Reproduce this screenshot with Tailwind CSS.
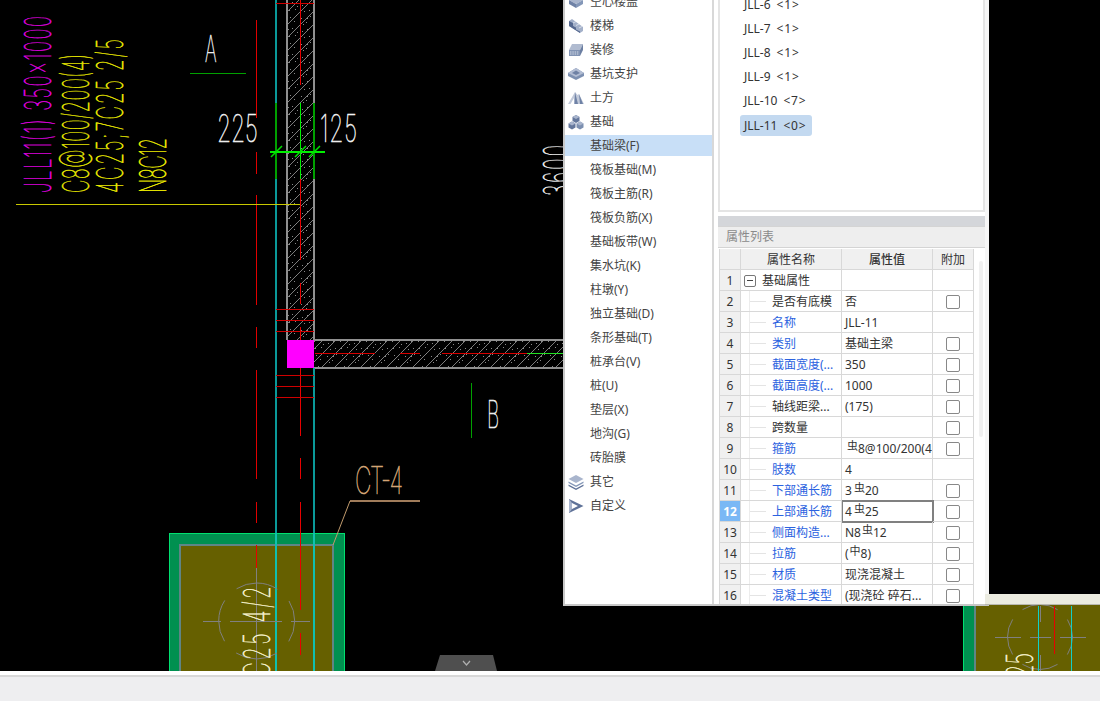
<!DOCTYPE html>
<html lang="zh">
<head>
<meta charset="utf-8">
<script src="https://cdn.jsdelivr.net/npm/@tailwindcss/browser@4"></script>
<title>属性列表</title>
</head>
<body class="m-0 bg-[#eeeef0] overflow-hidden">
<div class="w-[1100px] h-[701px] flex flex-col overflow-hidden font-['Noto_Sans','Noto_Sans_CJK_SC',sans-serif] text-xs text-[#333]">
  <main class="relative h-[671px] shrink-0 bg-black overflow-hidden">
    <svg class="absolute inset-0" width="1100" height="671" viewBox="0 0 1100 671" xmlns="http://www.w3.org/2000/svg" shape-rendering="crispEdges">
      <defs>
        <pattern id="h" width="26" height="26" patternUnits="userSpaceOnUse">
          <path d="M-1 14 14 -1M-1 27 27 -1M12 27 27 12" stroke="#7c7c7c" stroke-width="1" fill="none" shape-rendering="auto"/>
          <path d="M2 3h1v1h-1zM9 9h1v1h-1zM3 10h1v1h-1zM11 6h1v1h-1zM6 2h1v1h-1zM16 5h1v1h-1zM21 3h1v1h-1zM23 10h1v1h-1zM18 11h1v1h-1zM4 17h1v1h-1zM8 21h1v1h-1zM2 23h1v1h-1zM10 15h1v1h-1zM15 18h1v1h-1zM20 22h1v1h-1zM24 16h1v1h-1zM17 24h1v1h-1zM21 18h1v1h-1z" fill="#8a8a8a"/>
        </pattern>
      </defs>
      <!-- walls -->
      <rect x="287" y="-2" width="27" height="342" fill="url(#h)"/>
      <rect x="314" y="340" width="250" height="28" fill="url(#h)"/>
      <g stroke="#909090" stroke-width="2" fill="none">
        <path d="M287 0V340M313.500 0V340M314 340H564M314 367.500H564"/>
      </g>
      <rect x="287" y="340" width="27" height="28" fill="#ff00ff"/>
      <!-- axes teal -->
      <path d="M276 0V103M276 179V671M314 368V533" stroke="#0a9a9a" stroke-width="1.500" fill="none"/>
      <!-- red dashed left -->
      <path d="M256.500 20V118M256.500 152V174M256.500 195V305M256.500 327V348M256.500 370V479M256.500 502V523" stroke="#e00000" stroke-width="1.500" fill="none"/>
      <!-- red centre -->
      <path d="M300.500 0V85M300.500 179V260M300.500 283V304M300.500 327V340M300.500 368V436M300.500 458V479M300.500 502V533" stroke="#e80000" stroke-width="1.500" fill="none"/>
      <path d="M276 3.500H314M276 309.500H314M276 320.500H314M276 331.500H314M276 375.500H314M276 386.500H314M276 397.500H314" stroke="#d00000" stroke-width="1" fill="none"/>
      <path d="M315 353.500H375M400 353.500H420M442 353.500H527" stroke="#d80000" stroke-width="1" fill="none"/>
      <path d="M527 353.500H564" stroke="#22e022" stroke-width="1" fill="none"/>
      <!-- dimension -->
      <path d="M276 103V179M314 103V179" stroke="#00a000" stroke-width="1.500" fill="none"/>
      <path d="M300.500 103V179M270 152H325" stroke="#00f000" stroke-width="1.500" fill="none"/>
      <path d="M271 157 282 146M295 157 306 146M309 157 320 146" stroke="#00e000" stroke-width="1.500" fill="none" shape-rendering="auto"/>
      <path d="M190 73.500H246M471.500 383V438" stroke="#00a000" stroke-width="1.500" fill="none"/>
      <path d="M16 204.500H300" stroke="#c8c800" stroke-width="1.500" fill="none"/>
      <!-- pile cap -->
      <rect x="169.500" y="533.500" width="175" height="160" fill="#009050" stroke="#00e070" stroke-width="1.500"/>
      <rect x="180" y="545" width="153" height="150" fill="#666000" stroke="#5f8585" stroke-width="2"/>
      <path d="M276 533V671M314 533V671" stroke="#10c0b0" stroke-width="1.200" fill="none"/>
      <path d="M256.500 545V570M256.500 586V625M300.500 533V610M300.500 633V655" stroke="#e80000" stroke-width="1.500" fill="none"/>
      <circle cx="256.700" cy="621" r="38" fill="none" stroke="#808080" stroke-width="1" stroke-dasharray="43 16.700" stroke-dashoffset="21.500" shape-rendering="auto"/>
      <path d="M203 621.500H221M230 621.500H282M291 621.500H310M256.500 568V671" stroke="#808080" stroke-width="1" fill="none"/>
      <path d="M350 501H420" stroke="#a07c5a" stroke-width="2" fill="none"/>
      <path d="M350 501 333 545" stroke="#c09a6c" stroke-width="1" fill="none" shape-rendering="auto"/>
      <!-- right cap -->
      <rect x="963.500" y="600" width="200" height="90" fill="#009050" stroke="#00e070" stroke-width="1.500"/>
      <rect x="975" y="600" width="140" height="90" fill="#666000" stroke="#5f8585" stroke-width="1.500"/>
      <circle cx="1040" cy="637" r="32.500" fill="none" stroke="#808080" stroke-width="1" stroke-dasharray="37 14" stroke-dashoffset="18.500" shape-rendering="auto"/>
      <path d="M995 637.500H1021M1030 637.500H1051M1060 637.500H1086M1040.500 606V622M1040.500 655V671" stroke="#808080" stroke-width="1" fill="none"/>
      <path d="M1038.500 606V671M1071 606V671" stroke="#10d0c8" stroke-width="1" fill="none"/>
      <path d="M1054.500 606V654" stroke="#e80000" stroke-width="1.500" fill="none"/>
      <!-- CAD texts -->
      <g font-family="Inter, 'Liberation Sans', sans-serif" font-weight="100" shape-rendering="auto" stroke-width=".6">
        <text transform="translate(51 193) rotate(-90) scale(.5 1)" font-size="37" fill="#e000e0" stroke="#e000e0" textLength="354">JLL11(1) 350x1000</text>
        <text transform="translate(89 193) rotate(-90) scale(.5 1)" font-size="37" fill="#e8e800" stroke="#e8e800" textLength="278">C8@100/200(4)</text>
        <text transform="translate(123 193) rotate(-90) scale(.5 1)" font-size="37" fill="#f0f000" stroke="#f0f000" textLength="308">4C25;7C25 2/5</text>
        <text transform="translate(166 193) rotate(-90) scale(.5 1)" font-size="37" fill="#f0f000" stroke="#f0f000" textLength="110">N8C12</text>
        <text transform="translate(217 142) scale(.6 1)" font-size="38" fill="#f4f4f4" stroke="#f4f4f4" textLength="68">225</text>
        <text transform="translate(320 142) scale(.6 1)" font-size="38" fill="#f4f4f4" stroke="#f4f4f4" textLength="62">125</text>
        <text transform="translate(205 62) scale(.5 1)" font-size="36" fill="#f4f4f4" stroke="#f4f4f4">A</text>
        <text transform="translate(487 428) scale(.5 1)" font-size="38" fill="#f4f4f4" stroke="#f4f4f4">B</text>
        <text transform="translate(355 494) scale(.6 1)" font-size="38" fill="#d8a878" stroke="#d8a878" textLength="80">CT-4</text>
        <text transform="translate(571 196) rotate(-90) scale(.5 1)" font-size="38" fill="#f4f4f4" stroke="#f4f4f4" textLength="102">3600</text>
        <text transform="translate(270 677) rotate(-90) scale(.55 1)" font-size="37" fill="#f8f4d0" stroke="#f8f4d0" textLength="165">C25 4/2</text>
        <text transform="translate(1033 692) rotate(-90) scale(.55 1)" font-size="37" fill="#f8f4d0" stroke="#f8f4d0" textLength="71">C25</text>
      </g>
      <!-- collapse handle -->
      <path d="M440 655H493L497 671H435Z" fill="#4f4f4f" shape-rendering="auto"/>
      <path d="M463 661 466.500 665 470 661" stroke="#b0b0b0" stroke-width="1.200" fill="none" shape-rendering="auto"/>
    </svg>

    <!-- floating window -->
    <section class="absolute left-[563px] top-0 w-[426px] h-[606px] bg-white flex border-l-2 border-b-2 border-[#c8c8c8] overflow-hidden">
      <nav class="w-[149px] h-full shrink-0 border-r-2 border-[#d8d8d8] bg-white">
        <ul class="-mt-[10px] flex flex-col text-[#444]">
          <li class="h-6 flex items-center gap-[6px] pl-[3px]">
            <svg class="w-4 h-4 shrink-0" viewBox="0 0 16 16"><path d="M8 2 15 6 8 10 1 6Z" fill="#a9b5cd"/><path d="M1 6 8 10V14L1 10Z" fill="#6f82a6"/><path d="M15 6 8 10V14L15 10Z" fill="#8497b8"/></svg>
            <span>空心楼盖</span>
          </li>
          <li class="h-6 flex items-center gap-[6px] pl-[3px]">
            <svg class="w-4 h-4 shrink-0" viewBox="0 0 16 16"><path d="M1 3 4 1 15 9V13L12 15 1 8Z" fill="#a3b0c9"/><path d="M1 3 5 5V8L8 9.500V11.500L12 13.500V15L1 8Z" fill="#55688f"/><path d="M5 5 8 3.500M8 7.500 11 6M11 10 14 8.500" stroke="#e4e8f0" stroke-width=".8"/></svg>
            <span>楼梯</span>
          </li>
          <li class="h-6 flex items-center gap-[6px] pl-[3px]">
            <svg class="w-4 h-4 shrink-0" viewBox="0 0 16 16"><path d="M4 2H15L12 8H1Z" fill="#b0bbd0"/><path d="M1 8H12V14H1Z" fill="#8294b4"/><path d="M12 8 15 2V8L12 14Z" fill="#6c7fa2"/><path d="M2 10H11M2 12H11" stroke="#e8ecf4" stroke-width=".8" stroke-dasharray="1.500 .8"/></svg>
            <span>装修</span>
          </li>
          <li class="h-6 flex items-center gap-[6px] pl-[3px]">
            <svg class="w-4 h-4 shrink-0" viewBox="0 0 16 16"><path d="M8 2 16 7V10L8 14 0 10V7Z" fill="#7d90b1"/><path d="M8 2 16 7 8 11 0 7Z" fill="#b2bdd3"/><path d="M8 4.500 12 7 8 9 4 7Z" fill="#6e81a4"/></svg>
            <span>基坑支护</span>
          </li>
          <li class="h-6 flex items-center gap-[6px] pl-[3px]">
            <svg class="w-4 h-4 shrink-0" viewBox="0 0 16 16"><path d="M0 14 7 2 9.500 5 11 4 16 14Z" fill="#c2cada"/><path d="M7 2 10 14H6.500ZM11 4 15 14H12Z" fill="#6f82a6"/><path d="M2.500 14 6 8 6 14Z" fill="#fff"/></svg>
            <span>土方</span>
          </li>
          <li class="h-6 flex items-center gap-[6px] pl-[3px]">
            <svg class="w-4 h-4 shrink-0" viewBox="0 0 16 16"><path d="M8 1 11.500 3V7L8 9 4.500 7V3Z" fill="#64779c"/><path d="M4 7.500 7.500 9.500V13.500L4 15.500 .5 13.500V9.500Z" fill="#64779c"/><path d="M12 7.500 15.500 9.500V13.500L12 15.500 8.500 13.500V9.500Z" fill="#7c8fb0"/><path d="M8 1 11.500 3 8 5 4.500 3ZM4 7.500 7.500 9.500 4 11.500 .5 9.500ZM12 7.500 15.500 9.500 12 11.500 8.500 9.500Z" fill="#a9b5cd"/></svg>
            <span>基础</span>
          </li>
          <li class="h-[21px] mt-px mb-[2px] flex items-center pl-[25px] bg-[#c8dff7]">基础梁(F)</li>
          <li class="h-6 flex items-center pl-[25px]">筏板基础(M)</li>
          <li class="h-6 flex items-center pl-[25px]">筏板主筋(R)</li>
          <li class="h-6 flex items-center pl-[25px]">筏板负筋(X)</li>
          <li class="h-6 flex items-center pl-[25px]">基础板带(W)</li>
          <li class="h-6 flex items-center pl-[25px]">集水坑(K)</li>
          <li class="h-6 flex items-center pl-[25px]">柱墩(Y)</li>
          <li class="h-6 flex items-center pl-[25px]">独立基础(D)</li>
          <li class="h-6 flex items-center pl-[25px]">条形基础(T)</li>
          <li class="h-6 flex items-center pl-[25px]">桩承台(V)</li>
          <li class="h-6 flex items-center pl-[25px]">桩(U)</li>
          <li class="h-6 flex items-center pl-[25px]">垫层(X)</li>
          <li class="h-6 flex items-center pl-[25px]">地沟(G)</li>
          <li class="h-6 flex items-center pl-[25px]">砖胎膜</li>
          <li class="h-6 flex items-center gap-[6px] pl-[3px]">
            <svg class="w-4 h-4 shrink-0" viewBox="0 0 16 16"><path d="M8 1 15.500 5 8 9 .5 5Z" fill="#a9b5cd"/><path d="M.5 7.500 8 11.500 15.500 7.500V9L8 13 .5 9Z" fill="#8497b8"/><path d="M.5 10.500 8 14.500 15.500 10.500V12L8 16 .5 12Z" fill="#5f7298"/></svg>
            <span>其它</span>
          </li>
          <li class="h-6 flex items-center gap-[6px] pl-[3px]">
            <svg class="w-4 h-4 shrink-0" viewBox="0 0 16 16"><path d="M1 1 15.500 8 1 15ZM4 5V11L10 8Z" fill="#5f7298" fill-rule="evenodd"/><path d="M1 1 4 5V11L1 15Z" fill="#a9b5cd"/></svg>
            <span>自定义</span>
          </li>
        </ul>
      </nav>

      <div class="w-[4px] shrink-0 bg-white"></div>

      <div class="w-[267px] shrink-0 flex flex-col">
        <div class="h-[212px] shrink-0 border-l-2 border-r-2 border-b-2 border-[#e4e4e4] bg-white overflow-hidden pl-[21px]">
          <ul class="-mt-[7px] flex flex-col items-start">
            <li class="h-6 flex items-center gap-[6px] px-[3px]"><span>JLL-6</span><span class="tracking-[.8px]">&lt;1&gt;</span></li>
            <li class="h-6 flex items-center gap-[6px] px-[3px]"><span>JLL-7</span><span class="tracking-[.8px]">&lt;1&gt;</span></li>
            <li class="h-6 flex items-center gap-[6px] px-[3px]"><span>JLL-8</span><span class="tracking-[.8px]">&lt;1&gt;</span></li>
            <li class="h-6 flex items-center gap-[6px] px-[3px]"><span>JLL-9</span><span class="tracking-[.8px]">&lt;1&gt;</span></li>
            <li class="h-6 flex items-center gap-[6px] px-[3px]"><span>JLL-10</span><span class="tracking-[.8px]">&lt;7&gt;</span></li>
            <li class="h-[21px] mt-[2px] -ml-px flex items-center gap-[6px] pl-[4px] pr-[6px] bg-[#c3d9f0] rounded-[3px]"><span>JLL-11</span><span class="tracking-[.8px]">&lt;0&gt;</span></li>
          </ul>
        </div>
        <div class="h-[4px] shrink-0 bg-white"></div>
        <div class="h-[10px] shrink-0 bg-[#d4d6da]"></div>
        <div class="h-[22px] shrink-0 bg-[#eeeeee] border-y border-[#d4d4d4] flex items-center pl-[8px] text-[#8a8a8a]">属性列表</div>
        <div class="relative flex-1 min-h-0 bg-white overflow-hidden">
          <div class="ml-px mt-px w-[255px] grid grid-cols-[22px_101px_91px_41px] auto-rows-[21px] [&>div]:pt-px [&>div]:border-b [&>div]:border-r [&>div]:border-[#d8d8d8] [&>div]:flex [&>div]:items-center">
            <div class="bg-[#f0f0f0] border-l"></div><div class="bg-[#f0f0f0] justify-center">属性名称</div><div class="bg-[#f0f0f0] justify-center font-medium">属性值</div><div class="bg-[#f0f0f0] justify-center">附加</div>

            <div class="bg-[#f0f0f0] border-l justify-center">1</div><div class="pl-[3px] gap-[6px]"><span class="w-[12px] h-[12px] border border-[#777] rounded-[2px] flex items-center justify-center"><span class="w-[6px] h-px bg-[#444]"></span></span>基础属性</div><div></div><div></div>

            <div class="bg-[#f0f0f0] border-l justify-center">2</div><div class="relative pl-[31px] whitespace-nowrap overflow-hidden"><span class="absolute left-[8px] top-0 bottom-0 border-l border-[#ececec]"></span><span class="absolute left-[9px] w-4 border-t border-[#e4e4e4]"></span>是否有底模</div><div class="pl-[3px]">否</div><div class="justify-center"><span class="w-[14px] h-[14px] border border-[#888] rounded-[2px]"></span></div>

            <div class="bg-[#f0f0f0] border-l justify-center">3</div><div class="relative pl-[31px] whitespace-nowrap overflow-hidden text-[#2b62e0]"><span class="absolute left-[8px] top-0 bottom-0 border-l border-[#ececec]"></span><span class="absolute left-[9px] w-4 border-t border-[#e4e4e4]"></span>名称</div><div class="pl-[3px]">JLL-11</div><div></div>

            <div class="bg-[#f0f0f0] border-l justify-center">4</div><div class="relative pl-[31px] whitespace-nowrap overflow-hidden text-[#2b62e0]"><span class="absolute left-[8px] top-0 bottom-0 border-l border-[#ececec]"></span><span class="absolute left-[9px] w-4 border-t border-[#e4e4e4]"></span>类别</div><div class="pl-[3px]">基础主梁</div><div class="justify-center"><span class="w-[14px] h-[14px] border border-[#888] rounded-[2px]"></span></div>

            <div class="bg-[#f0f0f0] border-l justify-center">5</div><div class="relative pl-[31px] whitespace-nowrap overflow-hidden text-[#2b62e0]"><span class="absolute left-[8px] top-0 bottom-0 border-l border-[#ececec]"></span><span class="absolute left-[9px] w-4 border-t border-[#e4e4e4]"></span>截面宽度(...</div><div class="pl-[3px]">350</div><div class="justify-center"><span class="w-[14px] h-[14px] border border-[#888] rounded-[2px]"></span></div>

            <div class="bg-[#f0f0f0] border-l justify-center">6</div><div class="relative pl-[31px] whitespace-nowrap overflow-hidden text-[#2b62e0]"><span class="absolute left-[8px] top-0 bottom-0 border-l border-[#ececec]"></span><span class="absolute left-[9px] w-4 border-t border-[#e4e4e4]"></span>截面高度(...</div><div class="pl-[3px]">1000</div><div class="justify-center"><span class="w-[14px] h-[14px] border border-[#888] rounded-[2px]"></span></div>

            <div class="bg-[#f0f0f0] border-l justify-center">7</div><div class="relative pl-[31px] whitespace-nowrap overflow-hidden"><span class="absolute left-[8px] top-0 bottom-0 border-l border-[#ececec]"></span><span class="absolute left-[9px] w-4 border-t border-[#e4e4e4]"></span>轴线距梁...</div><div class="pl-[3px]">(175)</div><div class="justify-center"><span class="w-[14px] h-[14px] border border-[#888] rounded-[2px]"></span></div>

            <div class="bg-[#f0f0f0] border-l justify-center">8</div><div class="relative pl-[31px] whitespace-nowrap overflow-hidden"><span class="absolute left-[8px] top-0 bottom-0 border-l border-[#ececec]"></span><span class="absolute left-[9px] w-4 border-t border-[#e4e4e4]"></span>跨数量</div><div class="pl-[3px]"></div><div class="justify-center"><span class="w-[14px] h-[14px] border border-[#888] rounded-[2px]"></span></div>

            <div class="bg-[#f0f0f0] border-l justify-center">9</div><div class="relative pl-[31px] whitespace-nowrap overflow-hidden text-[#2b62e0]"><span class="absolute left-[8px] top-0 bottom-0 border-l border-[#ececec]"></span><span class="absolute left-[9px] w-4 border-t border-[#e4e4e4]"></span>箍筋</div><div class="pl-[5px] whitespace-nowrap overflow-hidden"><span class="text-[11px] -translate-y-[2px]">虫</span>8@100/200(4</div><div class="justify-center"><span class="w-[14px] h-[14px] border border-[#888] rounded-[2px]"></span></div>

            <div class="bg-[#f0f0f0] border-l justify-center">10</div><div class="relative pl-[31px] whitespace-nowrap overflow-hidden text-[#2b62e0]"><span class="absolute left-[8px] top-0 bottom-0 border-l border-[#ececec]"></span><span class="absolute left-[9px] w-4 border-t border-[#e4e4e4]"></span>肢数</div><div class="pl-[3px]">4</div><div></div>

            <div class="bg-[#f0f0f0] border-l justify-center">11</div><div class="relative pl-[31px] whitespace-nowrap overflow-hidden text-[#2b62e0]"><span class="absolute left-[8px] top-0 bottom-0 border-l border-[#ececec]"></span><span class="absolute left-[9px] w-4 border-t border-[#e4e4e4]"></span>下部通长筋</div><div class="pl-[3px] whitespace-nowrap">3<span class="text-[11px] ml-[2px] -translate-y-[2px]">虫</span>20</div><div class="justify-center"><span class="w-[14px] h-[14px] border border-[#888] rounded-[2px]"></span></div>

            <div class="!bg-[#7ab8f5] border-l justify-center text-white font-bold">12</div><div class="relative pl-[31px] whitespace-nowrap overflow-hidden text-[#2b62e0]"><span class="absolute left-[8px] top-0 bottom-0 border-l border-[#ececec]"></span><span class="absolute left-[9px] w-4 border-t border-[#e4e4e4]"></span>上部通长筋</div><div class="pl-[3px] whitespace-nowrap outline-2 -outline-offset-1 outline-[#808080]">4<span class="text-[11px] ml-[2px] -translate-y-[2px]">虫</span>25</div><div class="justify-center"><span class="w-[14px] h-[14px] border border-[#888] rounded-[2px]"></span></div>

            <div class="bg-[#f0f0f0] border-l justify-center">13</div><div class="relative pl-[31px] whitespace-nowrap overflow-hidden text-[#2b62e0]"><span class="absolute left-[8px] top-0 bottom-0 border-l border-[#ececec]"></span><span class="absolute left-[9px] w-4 border-t border-[#e4e4e4]"></span>侧面构造...</div><div class="pl-[3px] whitespace-nowrap">N8<span class="text-[11px] ml-[1px] -translate-y-[2px]">虫</span>12</div><div class="justify-center"><span class="w-[14px] h-[14px] border border-[#888] rounded-[2px]"></span></div>

            <div class="bg-[#f0f0f0] border-l justify-center">14</div><div class="relative pl-[31px] whitespace-nowrap overflow-hidden text-[#2b62e0]"><span class="absolute left-[8px] top-0 bottom-0 border-l border-[#ececec]"></span><span class="absolute left-[9px] w-4 border-t border-[#e4e4e4]"></span>拉筋</div><div class="pl-[3px] whitespace-nowrap">(<span class="text-[11px] ml-[1px] -translate-y-[2px]">中</span>8)</div><div class="justify-center"><span class="w-[14px] h-[14px] border border-[#888] rounded-[2px]"></span></div>

            <div class="bg-[#f0f0f0] border-l justify-center">15</div><div class="relative pl-[31px] whitespace-nowrap overflow-hidden text-[#2b62e0]"><span class="absolute left-[8px] top-0 bottom-0 border-l border-[#ececec]"></span><span class="absolute left-[9px] w-4 border-t border-[#e4e4e4]"></span>材质</div><div class="pl-[3px]">现浇混凝土</div><div class="justify-center"><span class="w-[14px] h-[14px] border border-[#888] rounded-[2px]"></span></div>

            <div class="bg-[#f0f0f0] border-l justify-center">16</div><div class="relative pl-[31px] whitespace-nowrap overflow-hidden text-[#2b62e0]"><span class="absolute left-[8px] top-0 bottom-0 border-l border-[#ececec]"></span><span class="absolute left-[9px] w-4 border-t border-[#e4e4e4]"></span>混凝土类型</div><div class="pl-[3px] whitespace-nowrap">(现浇砼 碎石...</div><div class="justify-center"><span class="w-[14px] h-[14px] border border-[#888] rounded-[2px]"></span></div>
          </div>
          <div class="absolute left-[261px] top-[13px] w-[4px] h-[176px] rounded-full bg-[#f0f0f0]"></div>
        </div>
      </div>
      <div class="w-[4px] shrink-0 bg-[#f6f6f6]"></div>
    </section>
    <!-- strip at the window's foot -->
    <div class="absolute left-[985px] top-[594px] w-[115px] h-[11px] bg-[#ebebe0] border-b border-[#b8b8b0]"></div>
  </main>
  <div class="h-[4px] shrink-0 bg-white"></div>
  <footer class="flex-1 bg-[#eeeef0] border-t-2 border-[#d8d8d8]"></footer>
</div>
</body>
</html>
